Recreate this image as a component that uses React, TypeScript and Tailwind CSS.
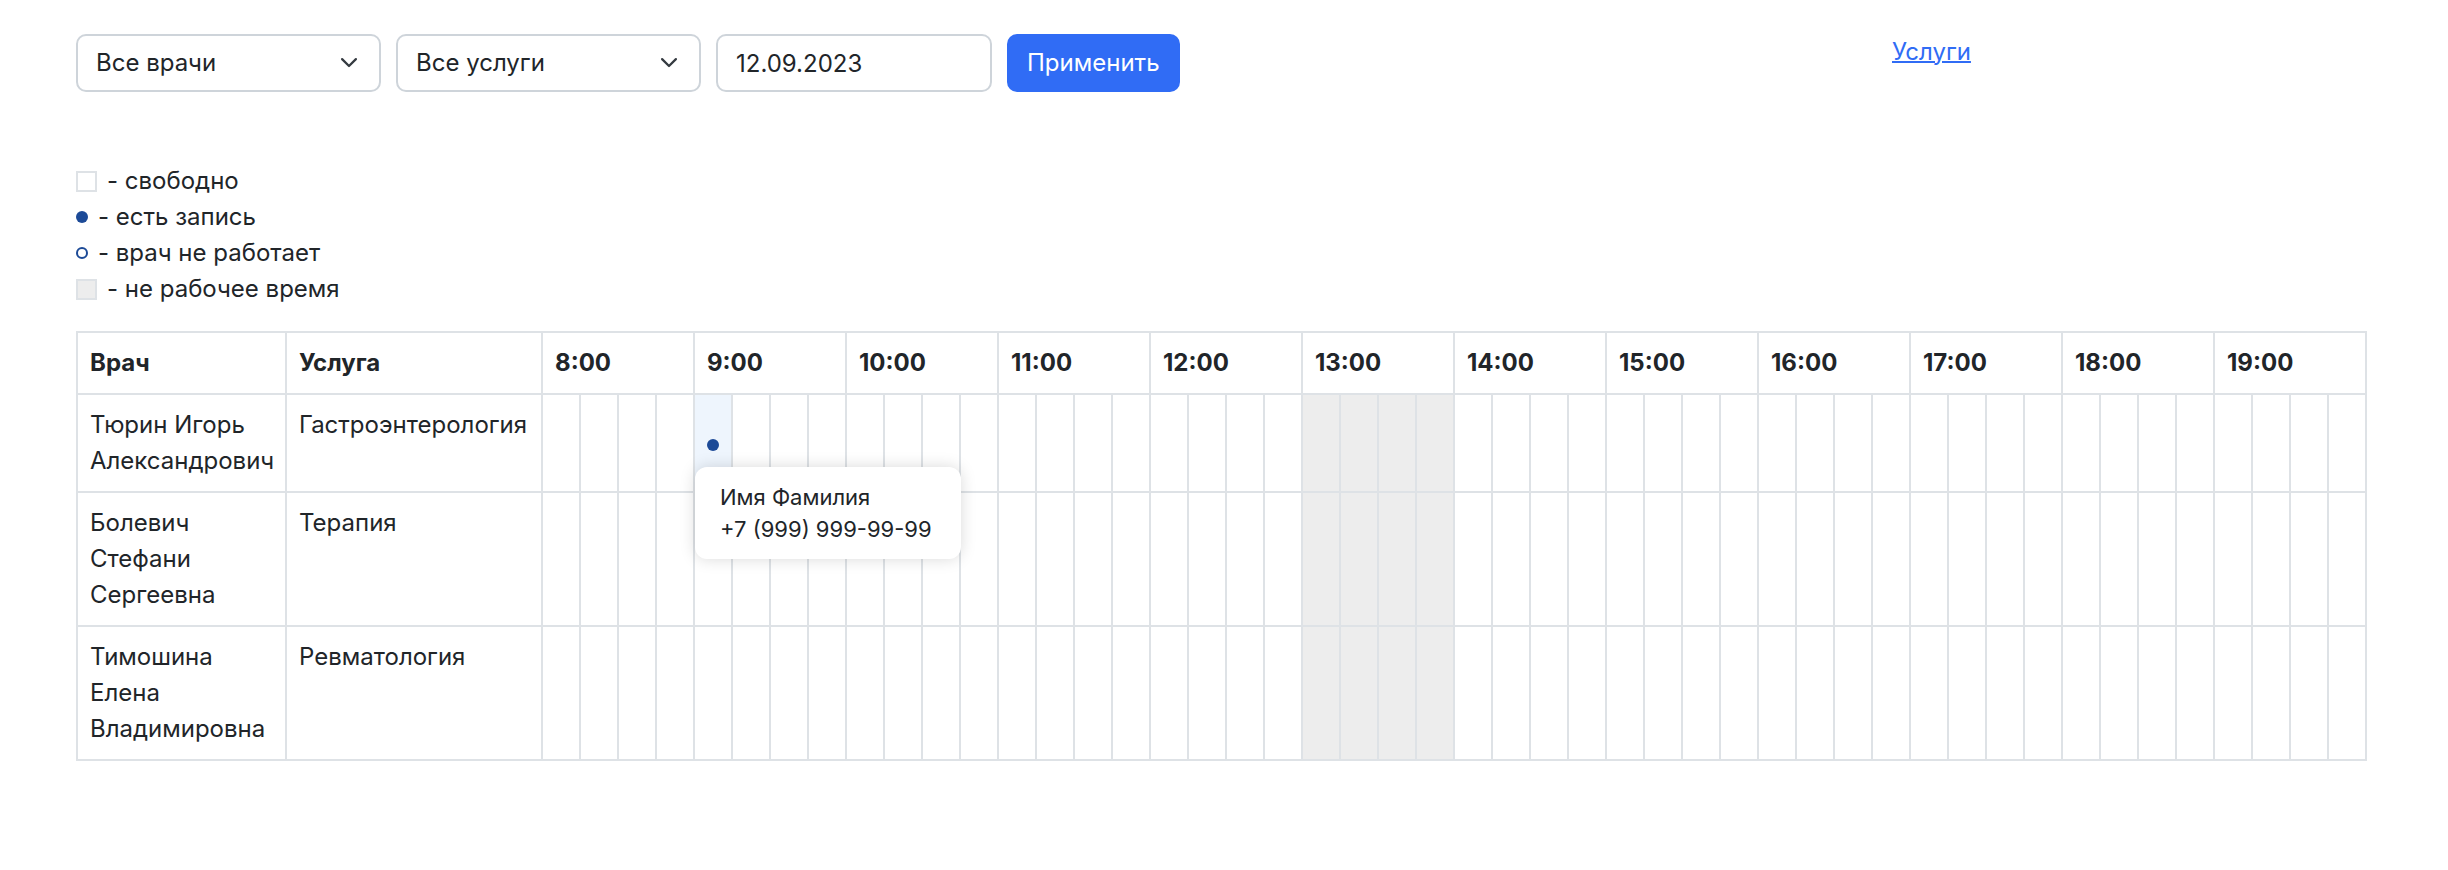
import { Fragment } from "react";

const hours = [8, 9, 10, 11, 12, 13, 14, 15, 16, 17, 18, 19];
const quarters = [0, 15, 30, 45];
const lunchHour = 13;

type Booking = { hour: number; minute: number; name: string; phone: string };
type Doctor = { name: string; service: string; bookings: Booking[] };

const doctors: Doctor[] = [
  {
    name: "Тюрин Игорь Александрович",
    service: "Гастроэнтерология",
    bookings: [{ hour: 9, minute: 0, name: "Имя Фамилия", phone: "+7 (999) 999-99-99" }],
  },
  { name: "Болевич Стефани Сергеевна", service: "Терапия", bookings: [] },
  { name: "Тимошина Елена Владимировна", service: "Ревматология", bookings: [] },
];

function FilterSelect({ label, value }: { label: string; value: string }) {
  return (
    <div className="relative w-[305px]">
      <select
        aria-label={label}
        className="h-[58px] w-full appearance-none rounded-[10px] border-2 border-[#ced4da] bg-white pr-12 pl-[18px]"
      >
        <option>{value}</option>
      </select>
      <svg
        viewBox="0 0 16 16"
        className="pointer-events-none absolute top-[17px] right-5 size-6"
        fill="none"
        stroke="#343a40"
        strokeWidth="1.5"
        strokeLinecap="round"
        strokeLinejoin="round"
        aria-hidden="true"
      >
        <path d="m3.4 5.4 4.6 4.6 4.6-4.6" />
      </svg>
    </div>
  );
}

function Slot({ hour, booking }: { hour: number; booking?: Booking }) {
  if (!booking) {
    return <td className={hour === lunchHour ? "border-2 border-[#dee2e6] bg-[#ededed]" : "border-2 border-[#dee2e6]"} />;
  }
  return (
    <td className="relative border-2 border-[#dee2e6] bg-[#eef5fd] pt-1 align-middle">
      <button type="button" aria-label="Запись" className="mx-auto block size-3 rounded-full bg-[#1c4a97]" />
      <div
        role="tooltip"
        className="absolute top-[72px] left-0 z-10 min-w-[266px] rounded-xl bg-white px-[25px] py-[14px] text-[22px] leading-8 whitespace-nowrap shadow-[0_0_16px_rgba(0,0,0,0.15)]"
      >
        <p>{booking.name}</p>
        <p>{booking.phone}</p>
      </div>
    </td>
  );
}

export default function App() {
  return (
    <main className="bg-white pt-[34px] pr-[81px] pb-12 pl-[76px] font-['Inter',sans-serif] text-2xl leading-9 text-[#212529]">
      <div className="grid grid-cols-[1fr_475px]">
        <form className="flex gap-[15px]" onSubmit={(e) => e.preventDefault()}>
          <FilterSelect label="Врач" value="Все врачи" />
          <FilterSelect label="Услуга" value="Все услуги" />
          <input
            aria-label="Дата"
            defaultValue="12.09.2023"
            className="h-[58px] w-[276px] rounded-[10px] border-2 border-[#ced4da] px-[18px]"
          />
          <button type="submit" className="h-[58px] rounded-[10px] bg-[#306cf5] px-5 text-white">
            Применить
          </button>
        </form>
        <nav>
          <a href="#services" className="text-[#306cf5] underline decoration-2">
            Услуги
          </a>
        </nav>
      </div>

      <ul className="mt-[71px]">
        <li className="flex items-center gap-[10px]">
          <span className="size-[21px] border-2 border-[#dee2e6]" />- свободно
        </li>
        <li className="flex items-center gap-[10px]">
          <span className="size-3 rounded-full bg-[#1c4a97]" />- есть запись
        </li>
        <li className="flex items-center gap-[10px]">
          <span className="size-3 rounded-full border-2 border-[#1c4a97]" />- врач не работает
        </li>
        <li className="flex items-center gap-[10px]">
          <span className="size-[21px] border-2 border-[#dee2e6] bg-[#ededed]" />- не рабочее время
        </li>
      </ul>

      <table className="mt-6 w-full table-fixed border-collapse text-left">
        <colgroup>
          <col className="w-[209px]" />
          <col className="w-[256px]" />
          {hours.map((h) => (
            <Fragment key={h}>
              {quarters.map((q) => (
                <col key={q} />
              ))}
            </Fragment>
          ))}
        </colgroup>
        <thead>
          <tr>
            <th className="border-2 border-[#dee2e6] p-3 font-bold">Врач</th>
            <th className="border-2 border-[#dee2e6] p-3 font-bold">Услуга</th>
            {hours.map((h) => (
              <th key={h} colSpan={4} className="border-2 border-[#dee2e6] p-3 font-bold">
                {h}:00
              </th>
            ))}
          </tr>
        </thead>
        <tbody>
          {doctors.map((d) => (
            <tr key={d.name}>
              <td className="border-2 border-[#dee2e6] p-3 align-top">{d.name}</td>
              <td className="border-2 border-[#dee2e6] p-3 align-top">{d.service}</td>
              {hours.map((h) => (
                <Fragment key={h}>
                  {quarters.map((q) => (
                    <Slot key={q} hour={h} booking={d.bookings.find((b) => b.hour === h && b.minute === q)} />
                  ))}
                </Fragment>
              ))}
            </tr>
          ))}
        </tbody>
      </table>
    </main>
  );
}
